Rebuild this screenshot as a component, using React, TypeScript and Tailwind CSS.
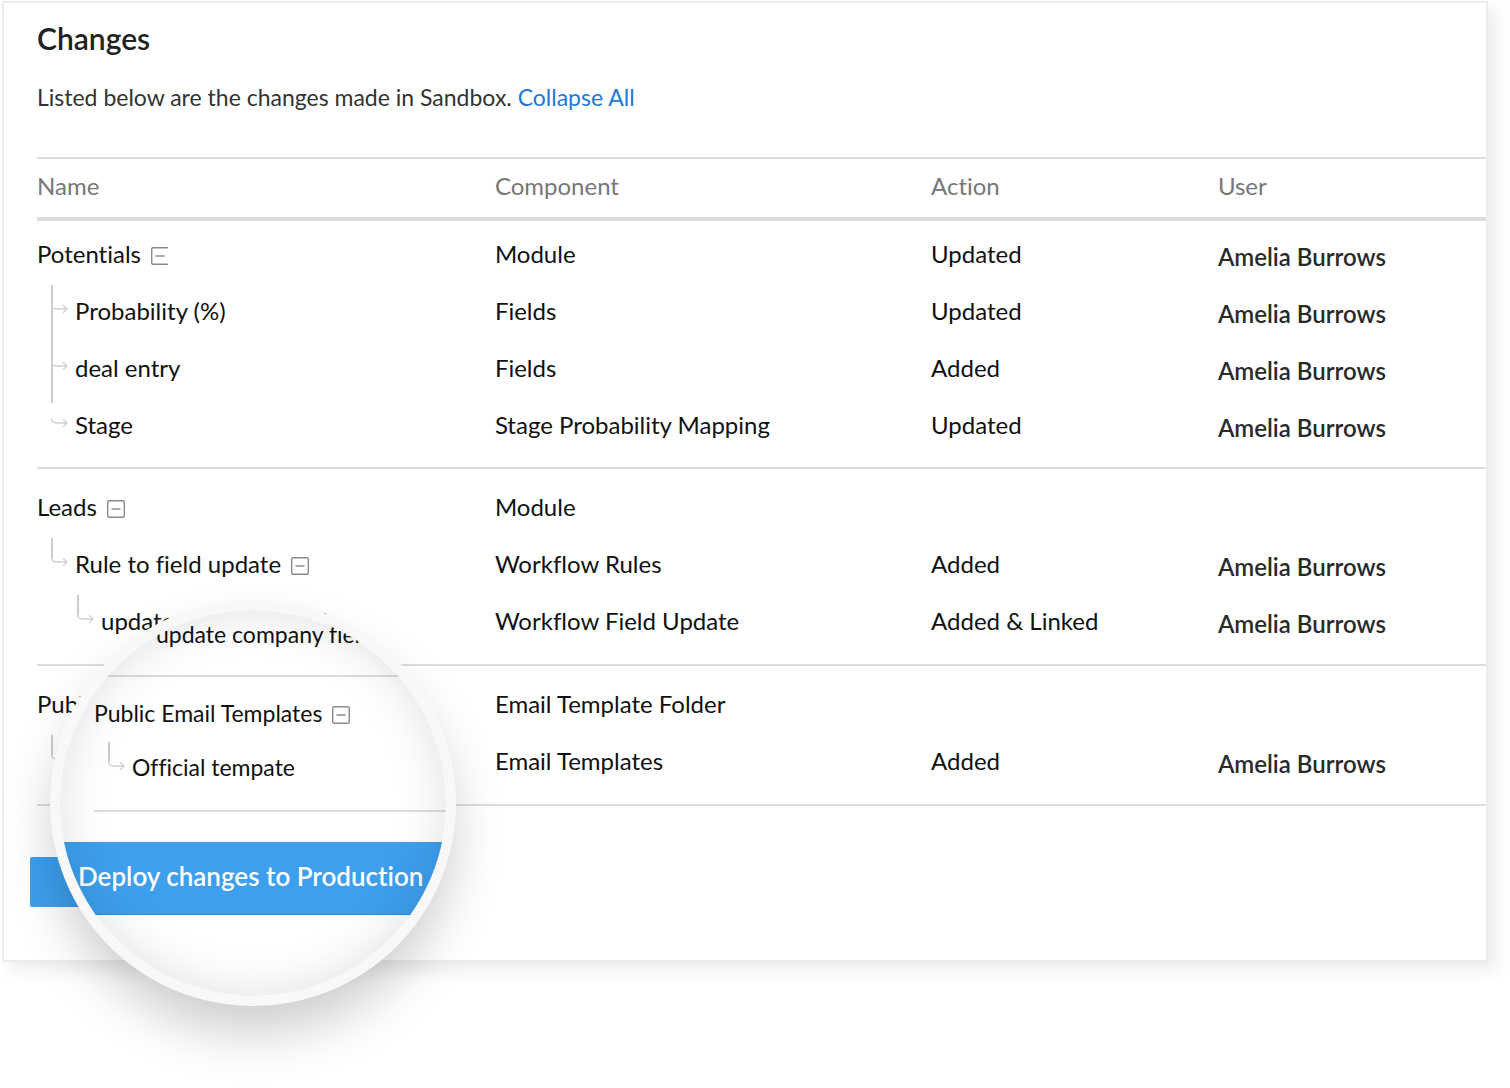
import type { ReactNode } from "react"

type ConnectorKind = "branch" | "branchLast" | "hook" | "elbow"

interface ChangeRow {
  name: string
  component: string
  action?: string
  user?: string
  depth: number
  connector?: ConnectorKind
  toggle?: "full" | "open"
}

interface ChangeGroup {
  id: string
  rows: ChangeRow[]
}

const USER = "Amelia Burrows"

const groups: ChangeGroup[] = [
  {
    id: "potentials",
    rows: [
      { name: "Potentials", component: "Module", action: "Updated", user: USER, depth: 0, toggle: "open" },
      { name: "Probability (%)", component: "Fields", action: "Updated", user: USER, depth: 1, connector: "branch" },
      { name: "deal entry", component: "Fields", action: "Added", user: USER, depth: 1, connector: "branchLast" },
      { name: "Stage", component: "Stage Probability Mapping", action: "Updated", user: USER, depth: 1, connector: "hook" },
    ],
  },
  {
    id: "leads",
    rows: [
      { name: "Leads", component: "Module", depth: 0, toggle: "full" },
      { name: "Rule to field update", component: "Workflow Rules", action: "Added", user: USER, depth: 1, connector: "elbow", toggle: "full" },
      { name: "update company field", component: "Workflow Field Update", action: "Added & Linked", user: USER, depth: 2, connector: "elbow" },
    ],
  },
  {
    id: "templates",
    rows: [
      { name: "Public Email Templates", component: "Email Template Folder", depth: 0, toggle: "full" },
      { name: "Official tempate", component: "Email Templates", action: "Added", user: USER, depth: 1, connector: "elbow" },
    ],
  },
]

const stems: Record<ConnectorKind, string> = {
  branch: "M15 3V60",
  branchLast: "M15 3V64",
  hook: "",
  elbow: "M15 3V23",
}

function Connector({ kind }: { kind: ConnectorKind }) {
  return (
    <svg width="38" height="57" viewBox="0 0 38 57" fill="none" className="shrink-0 overflow-visible" aria-hidden="true">
      <path d={stems[kind]} stroke="#cbcbcb" strokeWidth="2" />
      <path d="M14.5 22.5C14.5 25.5 17 27 20 27H30M26 23L30 27L26 31" stroke="#cfcfcf" strokeWidth="1.3" />
    </svg>
  )
}

function Toggle({ name, variant }: { name: string; variant: "full" | "open" }) {
  return (
    <button type="button" aria-label={`Collapse ${name}`} className="ml-[9px] mt-1 shrink-0 cursor-pointer">
      <svg width="20" height="20" viewBox="0 0 20 20" fill="none" stroke="#8a8a8a" strokeWidth="1.4">
        {variant === "full" ? (
          <rect x="1.7" y="1.7" width="16.6" height="16.6" rx="1.5" />
        ) : (
          <path d="M18 1.7H3.2Q1.7 1.7 1.7 3.2V16.8Q1.7 18.3 3.2 18.3H18" />
        )}
        <path d="M5.5 10H14.5" />
      </svg>
    </button>
  )
}

function NameLabel({ row }: { row: ChangeRow }) {
  return (
    <div className={`flex h-[57px] items-center whitespace-nowrap ${row.depth === 2 ? "pl-[26px]" : ""}`}>
      {row.connector && <Connector kind={row.connector} />}
      <span>{row.name}</span>
      {row.toggle && <Toggle name={row.name} variant={row.toggle} />}
    </div>
  )
}

function HeadCell({ className = "", children }: { className?: string; children: ReactNode }) {
  return (
    <th
      scope="col"
      className={`h-16 border-t-2 border-b-4 border-[#dcdcdc] px-0 pt-0 pb-1 text-left font-normal text-[#777] ${className}`}
    >
      {children}
    </th>
  )
}

function ChangesTable() {
  return (
    <table className="w-full table-fixed border-separate border-spacing-0 text-[24px] leading-7 text-[#111]">
      <thead>
        <tr>
          <HeadCell className="w-[31.6%]">Name</HeadCell>
          <HeadCell className="w-[30.1%]">Component</HeadCell>
          <HeadCell className="w-[19.8%]">Action</HeadCell>
          <HeadCell>User</HeadCell>
        </tr>
      </thead>
      {groups.map((group, groupIndex) => (
        <tbody key={group.id}>
          {group.rows.map((row, i) => {
            const isLast = i === group.rows.length - 1
            const top = i === 0 ? (groupIndex === 0 ? "pt-1" : "pt-[9px]") : "pt-0"
            const bottom = isLast ? (groupIndex === 0 ? "border-b-2 pb-[14px]" : "border-b-2 pb-[15px]") : "pb-0"
            const cell = `border-[#dcdcdc] px-0 ${top} ${bottom}`
            return (
              <tr key={row.name}>
                <td className={cell}>
                  <NameLabel row={row} />
                </td>
                <td className={cell}>{row.component}</td>
                <td className={cell}>{row.action}</td>
                <td className={cell}>
                  <div className="pt-1.5 font-semibold text-[#2a2a2a]">{row.user}</div>
                </td>
              </tr>
            )
          })}
        </tbody>
      ))}
    </table>
  )
}

function Magnifier() {
  return (
    <div className="absolute -bottom-11 left-12 size-[406px] rounded-full bg-[#f8f8f8] p-[10px] shadow-[0_30px_52px_-4px_rgba(0,0,0,0.2)]">
      <div className="relative size-full overflow-hidden rounded-full bg-white text-[23px] leading-7 text-[#111]">
        <div className="ml-[34px] flex h-[67px] items-center border-b-2 border-[#dcdcdc] pb-[17px] pl-[62px] whitespace-nowrap">
          update company field
        </div>
        <div className="ml-[34px] border-b-2 border-[#dcdcdc] pt-[9px] pb-4">
          <div className="flex h-[54px] items-center whitespace-nowrap">
            <span>Public Email Templates</span>
            <Toggle name="Public Email Templates" variant="full" />
          </div>
          <div className="flex h-[54px] items-center whitespace-nowrap">
            <Connector kind="elbow" />
            <span>Official tempate</span>
          </div>
        </div>
        <button
          type="button"
          className="mt-[30px] h-[73px] w-full cursor-pointer border-b border-[#1e8fea] bg-[#3d9fee] pb-1 pl-[18px] text-left text-[26px] font-semibold whitespace-nowrap text-white"
        >
          Deploy changes to Production
        </button>
        <div className="pointer-events-none absolute inset-0 rounded-full shadow-[inset_0_0_50px_rgba(0,0,0,0.12)]" />
      </div>
    </div>
  )
}

export default function App() {
  return (
    <main className="min-h-screen bg-white pt-px pr-[22px] pl-[2px] font-[Lato,'Liberation_Sans',sans-serif] [font-variant-ligatures:none]">
      <div className="relative">
        <section className="border-2 border-[#ececec] bg-white pb-[53px] shadow-[8px_8px_16px_rgba(0,0,0,0.08)]">
          <div className="pl-[33px]">
            <h1 className="pt-[17px] text-[30px] leading-9 font-semibold text-[#222]">Changes</h1>
            <p className="mt-[27px] mb-[46px] text-[23px] leading-7 text-[#333]">
              Listed below are the changes made in Sandbox.{" "}
              <a href="#collapse" className="text-[#1f78d8]">
                Collapse All
              </a>
            </p>
            <ChangesTable />
          </div>
          <button
            type="button"
            aria-label="Deploy changes to Production"
            className="mt-[51px] ml-[26px] block h-[50px] w-[340px] cursor-pointer rounded-xs bg-[#3d9fee]"
          />
        </section>
        <Magnifier />
      </div>
    </main>
  )
}
